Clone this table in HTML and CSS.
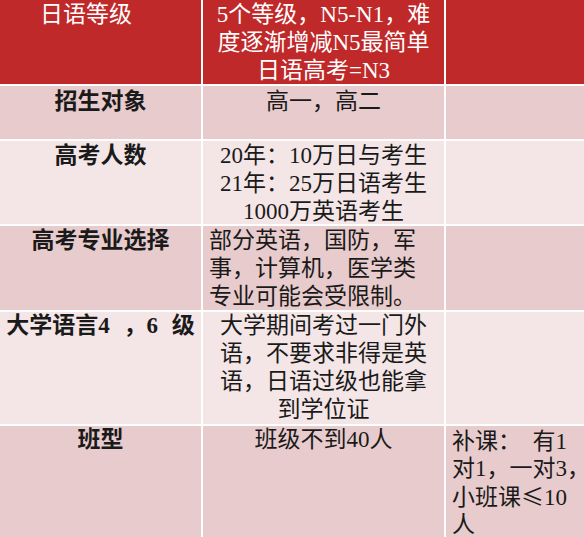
FILE: index.html
```html
<!DOCTYPE html>
<html lang="zh-CN">
<head>
<meta charset="utf-8">
<title>日语等级</title>
<link rel="stylesheet" href="styles.css">
</head>
<body>
<div class="table">
  <div class="cell head c1 h-first">日语等级</div>
  <div class="cell head c2">5个等级，N5-N1，难<br>度逐渐增减N5最简单<br>日语高考=N3</div>
  <div class="cell head c3"></div>

  <div class="cell dark c1 r2">招生对象</div>
  <div class="cell dark c2 r2">高一，高二</div>
  <div class="cell dark c3"></div>

  <div class="cell light c1">高考人数</div>
  <div class="cell light c2">20年：10万日与考生<br>21年：25万日语考生<br>1000万英语考生</div>
  <div class="cell light c3"></div>

  <div class="cell dark c1">高考专业选择</div>
  <div class="cell dark c2 left">部分英语，国防，军<br>事，计算机，医学类<br>专业可能会受限制。</div>
  <div class="cell dark c3"></div>

  <div class="cell light c1 r5 wide">大学语言4 ，6 级</div>
  <div class="cell light c2 r5">大学期间考过一门外<br>语，不要求非得是英<br>语，日语过级也能拿<br>到学位证</div>
  <div class="cell light c3"></div>

  <div class="cell dark c1 r5">班型</div>
  <div class="cell dark c2 r5">班级不到40人</div>
  <div class="cell dark c3 left r6">补课：&nbsp;&nbsp;有1<br>对1，一对3<span class="tight">，</span><br>小班课<span class="cjk">≤</span>10<br>人</div>
</div>
</body>
</html>
```

FILE: styles.css
```css
html, body {
  margin: 0;
  padding: 0;
  background: #ffffff;
}

.table {
  display: grid;
  grid-template-columns: 201px 241px 138px;
  grid-template-rows: 84px 53px 83px 84px 112px 111px;
  gap: 2px;
  width: 584px;
  height: 537px;
  background: #ffffff;
  overflow: hidden;
}

.cell {
  font-family: "Liberation Serif", "Noto Sans CJK SC", serif;
  font-size: 23px;
  line-height: 28px;
  color: #1a1a1a;
  padding-top: 1px;
  white-space: nowrap;
  box-sizing: border-box;
}

.head {
  background: #c0292a;
  color: #ffffff;
}

.dark {
  background: #e8cbcc;
}

.light {
  background: #f4e6e7;
}

.c1 {
  text-align: center;
  font-weight: bold;
}

.head.c1 {
  font-weight: normal;
}

.h-first {
  text-align: left;
  padding-left: 40px;
}

.c2 {
  text-align: center;
}

.c3 {
  text-align: left;
  padding-left: 5px;
}

.left {
  text-align: left;
  padding-left: 6px;
}

.r2 {
  padding-top: 2px;
}

.r5 {
  padding-top: 0;
}

.r6 {
  padding-top: 2px;
  line-height: 27px;
}

.wide {
  word-spacing: 8px;
}

.tight {
  letter-spacing: -12px;
}

.cjk {
  font-family: "Noto Sans CJK SC", sans-serif;
}
```
